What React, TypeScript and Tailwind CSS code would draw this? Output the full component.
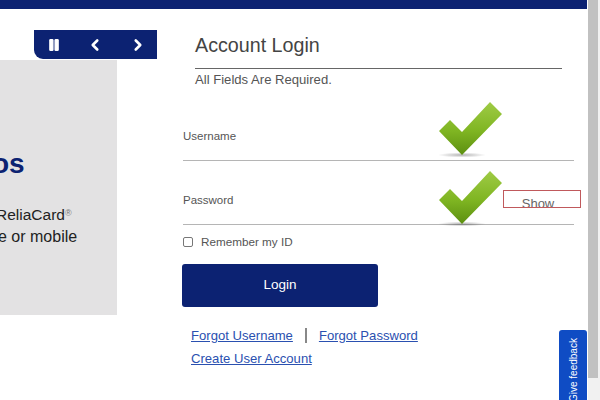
import React from 'react';
import { Pause, ChevronLeft, ChevronRight } from 'lucide-react';

const Check = () => (
  <svg viewBox="0 0 64 58" className="w-[64px] h-[58px]">
    <defs>
      <linearGradient id="chk" x1="0" y1="0" x2="0" y2="1">
        <stop offset="0" stopColor="#9fcb45" />
        <stop offset="0.55" stopColor="#7fb522" />
        <stop offset="1" stopColor="#5c8f10" />
      </linearGradient>
      <radialGradient id="shadow">
        <stop offset="0" stopColor="#000" stopOpacity="0.3" />
        <stop offset="1" stopColor="#000" stopOpacity="0" />
      </radialGradient>
    </defs>
    <ellipse cx="23" cy="53" rx="24" ry="2.5" fill="url(#shadow)" />
    <path d="M0 29 L11 18 L23 30 L51 0 L63 12 L23 53 Z" fill="url(#chk)" />
  </svg>
);

const Field = ({ label, check, show }: { label: string; check: string; show?: boolean }) => (
  <div className="relative h-[64px] border-b border-[#b5b5b5]">
    <label className="absolute left-0 top-[32px] text-[11.5px] leading-[14px] text-[#555]">{label}</label>
    <div className={`absolute left-[256px] ${check}`}>
      <Check />
    </div>
    {show && (
      <div className="absolute left-[320px] top-[29px] w-[78px] h-[18px] border border-[#c0595c] overflow-hidden pr-[8px] text-center text-[13px] leading-[25px] text-[#666]">
        Show
      </div>
    )}
  </div>
);

export default function App() {
  return (
    <div className="relative w-[600px] h-[400px] overflow-hidden bg-white font-['Liberation_Sans',Arial,sans-serif]">
      <div className="flex h-full">
        <div className="w-[588px] shrink-0">
          <div className="h-[9px] mr-px bg-[#0c2272]" />
          <div className="flex">
            <div className="w-[157px] shrink-0">
              <div className="mt-[21px] ml-[34px] w-[123px] h-[29px] bg-[#0c2272] rounded-bl-[9px] flex items-center text-white">
                <Pause className="ml-[13px] w-[14px] h-[14px]" fill="white" strokeWidth={2.5} />
                <ChevronLeft className="ml-[25px] w-[18px] h-[18px]" strokeWidth={3.5} />
                <ChevronRight className="ml-[25px] w-[18px] h-[18px]" strokeWidth={3.5} />
              </div>
              <div className="mt-px w-[117px] h-[255px] bg-[#e3e2e3] overflow-hidden pt-[89px] whitespace-nowrap">
                <div className="-ml-[8px] text-[28px] leading-[30px] font-bold text-[#0c2272]">os</div>
                <div className="mt-[25px] -ml-[4px] text-[15.5px] leading-[22px] text-[#222]">
                  ReliaCard<sup className="text-[9px] text-[#777]">®</sup>
                </div>
                <div className="-ml-[2px] text-[16px] leading-[21px] text-[#222]">e or mobile</div>
              </div>
            </div>
            <div className="ml-[26px] w-[391px]">
              <div className="ml-[12px] mt-[23px] w-[367px] border-b border-[#666] pb-[10px] text-[19.7px] leading-[26px] text-[#444]">
                Account Login
              </div>
              <div className="ml-[12px] mt-[2px] text-[13.1px] leading-[18px] text-[#555]">All Fields Are Required.</div>
              <div className="mt-[8px]">
                <Field label="Username" check="top-[5px]" />
                <Field label="Password" check="top-[10px]" show />
              </div>
              <label className="mt-[9px] flex items-center text-[11.7px] leading-[16px] text-[#555]">
                <span className="w-[10px] h-[10px] border border-[#777] rounded-[2px] bg-white" />
                <span className="ml-[8px]">Remember my ID</span>
              </label>
              <button className="mt-[14px] -ml-px block w-[196px] h-[43px] bg-[#0c2272] rounded-[3px] text-white text-[13.5px]">
                Login
              </button>
              <div className="mt-[17px] ml-[8px] text-[13.1px] leading-[23px] text-[#2a50b0]">
                <div className="flex items-center">
                  <a className="underline">Forgot Username</a>
                  <span className="mx-[12px] w-[2px] h-[15px] bg-[#888]" />
                  <a className="underline">Forgot Password</a>
                </div>
                <a className="underline">Create User Account</a>
              </div>
            </div>
          </div>
        </div>
        <div className="w-[12px] bg-[#f1f1f1]">
          <div className="w-[10px] h-[378px] bg-[#c1c1c1]" />
        </div>
      </div>
      <div className="absolute left-[559px] top-[330px] w-[28px] h-[80px] bg-[#0f4cc4] rounded-t-[3px] flex items-start justify-center">
        <span className="ml-[2px] [writing-mode:vertical-rl] rotate-180 text-[10px] leading-[28px] text-white whitespace-nowrap h-[70px] mt-[2px]">
          Give feedback
        </span>
      </div>
    </div>
  );
}
